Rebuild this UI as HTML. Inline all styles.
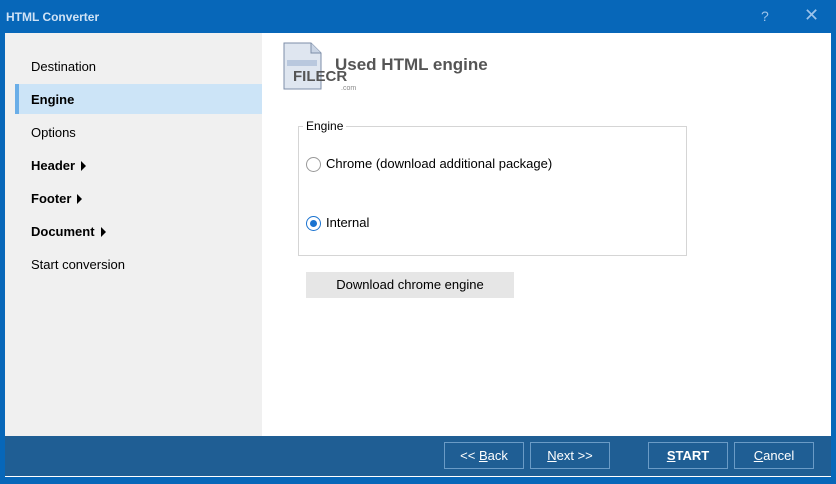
<!DOCTYPE html>
<html><head><style>
*{margin:0;padding:0;box-sizing:border-box}
body{width:836px;height:484px;background:#0767b9;font-family:"Liberation Sans","DejaVu Sans",sans-serif;font-size:13px;color:#000;position:relative;overflow:hidden}
.abs{position:absolute}
.title{left:6px;top:10px;color:#cfe2f5;font-weight:bold;font-size:12px}
.main{left:5px;top:33px;width:826px;height:403px;background:#fff}
.side{left:5px;top:33px;width:257px;height:403px;background:#f0f0f0}
.item{position:absolute;left:26px;font-size:13px}
.sel{left:15px;top:84px;width:247px;height:30px;background:#cce4f7}
.selbar{left:15px;top:84px;width:4px;height:30px;background:#6aaee8}
.bar{left:5px;top:436px;width:826px;height:41px;background:#1f5e94;border-bottom:1px solid #fff}
.btn{position:absolute;top:442px;height:27px;border:1px solid #6a9bc6;color:#fff;text-align:center;line-height:25px;font-size:13px}
.tri{display:inline-block;width:0;height:0;border-left:5px solid #000;border-top:5px solid transparent;border-bottom:5px solid transparent;margin-left:6px;vertical-align:-1px}
</style></head><body>
<div class="abs title">HTML Converter</div>
<div class="abs" style="left:761px;top:8px;color:#9cc3ea;font-size:14px">?</div>
<div class="abs" style="left:804px;top:5px;color:#9cc3ea;font-size:18px">✕</div>
<div class="abs main"></div>
<div class="abs side"></div>
<div class="abs sel"></div><div class="abs selbar"></div>
<div class="item" style="top:59px;left:31px">Destination</div>
<div class="item" style="top:92px;left:31px;font-weight:bold">Engine</div>
<div class="item" style="top:125px;left:31px">Options</div>
<div class="item" style="top:158px;left:31px;font-weight:bold">Header<span class="tri"></span></div>
<div class="item" style="top:191px;left:31px;font-weight:bold">Footer<span class="tri"></span></div>
<div class="item" style="top:224px;left:31px;font-weight:bold">Document<span class="tri"></span></div>
<div class="item" style="top:257px;left:31px">Start conversion</div>

<svg class="abs" style="left:283px;top:42px" width="40" height="50"><path d="M1 1H28L38 11V47H1Z" fill="#dfe6f0" stroke="#7d8ea8"/><path d="M28 1V11H38" fill="#c9d4e4" stroke="#7d8ea8"/><rect x="4" y="18" width="30" height="6" fill="#b9c8de"/></svg>
<div class="abs" style="left:293px;top:68px;font-weight:bold;color:#555;font-size:15px">FILECR</div>
<div class="abs" style="left:341px;top:85px;color:#888;font-size:7px">.com</div>
<div class="abs" style="left:335px;top:55px;font-weight:bold;color:#555;font-size:17px">Used HTML engine</div>

<div class="abs" style="left:298px;top:126px;width:389px;height:130px;border:1px solid #d5d5d5"></div>
<div class="abs" style="left:303px;top:119px;background:#fff;padding:0 3px;font-size:12px">Engine</div>
<div class="abs" style="left:306px;top:157px;width:15px;height:15px;border:1px solid #999;border-radius:50%;background:#fff"></div>
<div class="abs" style="left:326px;top:156px">Chrome (download additional package)</div>
<div class="abs" style="left:306px;top:216px;width:15px;height:15px;border:1px solid #1a73d0;border-radius:50%;background:#fff"></div>
<div class="abs" style="left:310px;top:220px;width:7px;height:7px;border-radius:50%;background:#1a73d0"></div>
<div class="abs" style="left:326px;top:215px">Internal</div>
<div class="abs" style="left:306px;top:272px;width:208px;height:26px;background:#e6e6e6;text-align:center;line-height:26px">Download chrome engine</div>

<div class="abs bar"></div>
<div class="btn" style="left:444px;width:80px">&lt;&lt; <u>B</u>ack</div>
<div class="btn" style="left:530px;width:80px"><u>N</u>ext &gt;&gt;</div>
<div class="btn" style="left:648px;width:80px;font-weight:bold"><u>S</u>TART</div>
<div class="btn" style="left:734px;width:80px"><u>C</u>ancel</div>
</body></html>
